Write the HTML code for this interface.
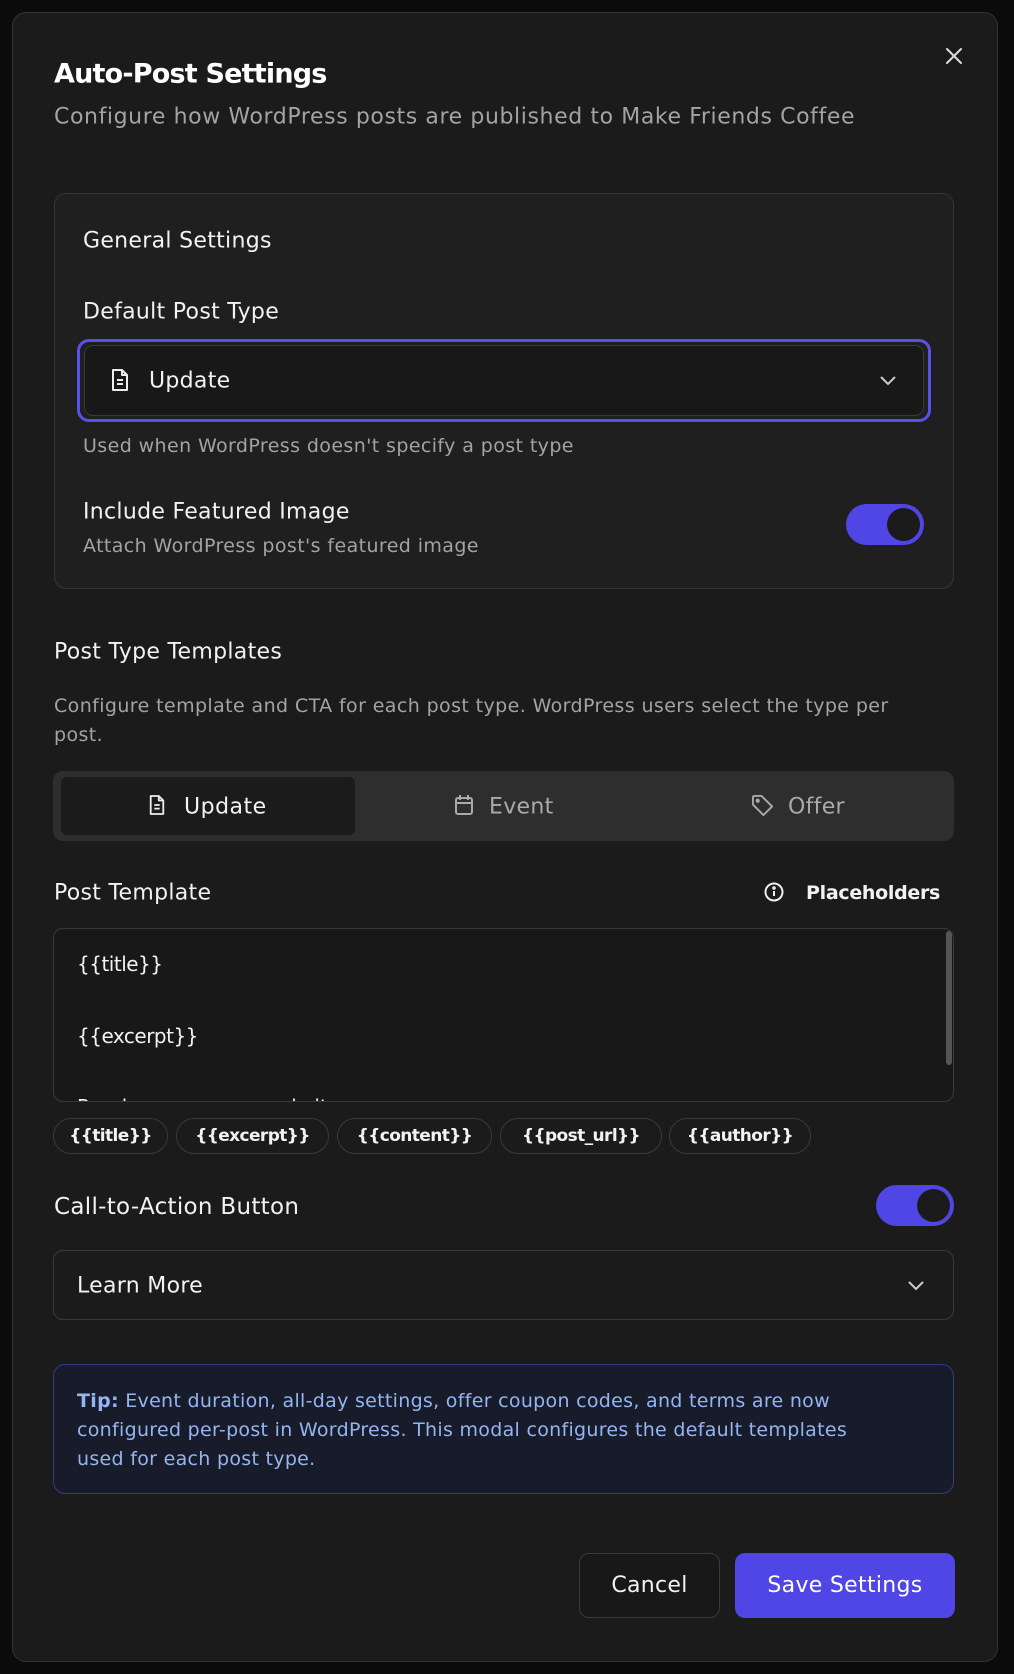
<!DOCTYPE html>
<html><head><meta charset="utf-8"><style>
*{box-sizing:border-box;margin:0;padding:0}
body{width:1014px;height:1674px;background:#0b0b0b;font-family:"DejaVu Sans","Liberation Sans",sans-serif;color:#f2f2f2;position:relative;overflow:hidden}
.a{position:absolute;white-space:nowrap}
.modal{position:absolute;left:12px;top:12px;width:986px;height:1650px;background:#1b1b1b;border:1px solid #333;border-radius:14px}
.lbl{font-size:22px;color:#f2f2f2;letter-spacing:0.3px}
.muted{color:#a3a3a3;font-size:19px;letter-spacing:0.4px}
.toggle{position:absolute;width:78px;height:41px;border-radius:21px;background:#4f46e5}
.toggle::after{content:"";position:absolute;right:4px;top:4px;width:33px;height:33px;border-radius:50%;background:#1b1b1b}
.chip{position:absolute;top:1118px;height:36px;border:1px solid #3a3a3a;border-radius:18px;background:#1b1b1b;font-weight:bold;font-size:17px;line-height:34px;text-align:center;letter-spacing:-0.6px}
.cy{transform:translateY(-50%)}
</style></head><body>
<div class="modal"></div>
<svg class="a" style="left:945px;top:47px" width="18" height="18" viewBox="0 0 18 18"><path d="M2 2L16 16M16 2L2 16" stroke="#ddd" stroke-width="2" stroke-linecap="round"/></svg>
<div class="a cy" style="left:54px;top:74px;font-size:27px;font-weight:bold;color:#fff;letter-spacing:-0.8px">Auto-Post Settings</div>
<div class="a cy" style="left:54px;top:117px;font-size:22px;color:#a3a3a3;letter-spacing:0.6px">Configure how WordPress posts are published to Make Friends Coffee</div>

<div class="a" style="left:54px;top:193px;width:900px;height:396px;background:#1f1f1f;border:1px solid #353535;border-radius:12px"></div>
<div class="a cy lbl" style="left:83px;top:241px">General Settings</div>
<div class="a cy lbl" style="left:83px;top:312px">Default Post Type</div>
<div class="a" style="left:77px;top:339px;width:854px;height:83px;border:3px solid #5b50e8;border-radius:12px"></div>
<div class="a" style="left:84px;top:345px;width:840px;height:71px;border:1px solid #3a3a3a;border-radius:9px;background:#181818"></div>
<svg class="a" style="left:110px;top:368px" width="20" height="24" viewBox="0 0 20 24" fill="none" stroke="#eee" stroke-width="2" stroke-linejoin="round"><path d="M3 2h9l5 5v15H3z"/><path d="M12 2v5h5M7 12h6M7 16h6"/></svg>
<div class="a cy" style="left:149px;top:381px;font-size:22px;letter-spacing:0.3px">Update</div>
<svg class="a" style="left:879px;top:375px" width="18" height="11" viewBox="0 0 18 11"><path d="M2 2l7 7 7-7" stroke="#ccc" stroke-width="2" fill="none"/></svg>
<div class="a cy muted" style="left:83px;top:446px">Used when WordPress doesn't specify a post type</div>
<div class="a cy lbl" style="left:83px;top:512px">Include Featured Image</div>
<div class="a cy muted" style="left:83px;top:546px">Attach WordPress post's featured image</div>
<div class="toggle" style="left:846px;top:504px"></div>

<div class="a cy lbl" style="left:54px;top:652px">Post Type Templates</div>
<div class="a muted" style="left:54px;top:692px;line-height:29px;white-space:normal;width:870px">Configure template and CTA for each post type. WordPress users select the type per post.</div>
<div class="a" style="left:53px;top:771px;width:901px;height:70px;background:#2e2e2e;border-radius:10px"></div>
<div class="a" style="left:61px;top:777px;width:294px;height:58px;background:#1b1b1b;border-radius:6px"></div>
<svg class="a" style="left:148px;top:794px" width="18" height="22" viewBox="0 0 20 24" fill="none" stroke="#eee" stroke-width="2" stroke-linejoin="round"><path d="M3 2h9l5 5v15H3z"/><path d="M12 2v5h5M7 12h6M7 16h6"/></svg>
<div class="a cy" style="left:184px;top:807px;font-size:22px;letter-spacing:0.5px">Update</div>
<svg class="a" style="left:454px;top:794px" width="20" height="22" viewBox="0 0 20 22" fill="none" stroke="#aaa" stroke-width="2"><rect x="2" y="4" width="16" height="16" rx="2"/><path d="M2 9h16M6 1v5M14 1v5"/></svg>
<div class="a cy" style="left:489px;top:807px;font-size:22px;color:#aaa;letter-spacing:0.3px">Event</div>
<svg class="a" style="left:751px;top:794px" width="23" height="23" viewBox="0 0 24 24" fill="none" stroke="#aaa" stroke-width="2" stroke-linejoin="round"><path d="M2 3v8l11 11 9-9L11 2H3z"/><circle cx="7" cy="7" r="1.2" fill="#aaa"/></svg>
<div class="a cy" style="left:788px;top:807px;font-size:22px;color:#aaa;letter-spacing:0.3px">Offer</div>

<div class="a cy lbl" style="left:54px;top:893px">Post Template</div>
<svg class="a" style="left:764px;top:882px" width="20" height="20" viewBox="0 0 20 20" fill="none" stroke="#eee" stroke-width="2"><circle cx="10" cy="10" r="8.5"/><path d="M10 9v5"/><circle cx="10" cy="6" r="0.8" fill="#eee"/></svg>
<div class="a cy" style="left:806px;top:893px;font-size:19px;font-weight:bold;letter-spacing:-0.3px">Placeholders</div>
<div class="a" style="left:53px;top:928px;width:901px;height:174px;border:1px solid #3a3a3a;border-radius:10px;background:#181818;overflow:hidden">
<div class="a cy" style="left:23px;top:35px;font-size:20px;letter-spacing:-0.5px">{{title}}</div>
<div class="a cy" style="left:23px;top:107px;font-size:20px;letter-spacing:-0.5px">{{excerpt}}</div>
<div class="a cy" style="left:23px;top:178px;font-size:20px">Read more on our website →</div>
<div class="a" style="left:892px;top:2px;width:6px;height:134px;border-radius:3px;background:#555"></div>
</div>
<div class="chip" style="left:53px;width:115px">{{title}}</div>
<div class="chip" style="left:176px;width:153px">{{excerpt}}</div>
<div class="chip" style="left:337px;width:155px">{{content}}</div>
<div class="chip" style="left:500px;width:162px">{{post_url}}</div>
<div class="chip" style="left:669px;width:142px">{{author}}</div>

<div class="a cy lbl" style="left:54px;top:1207px;font-size:23px">Call-to-Action Button</div>
<div class="toggle" style="left:876px;top:1185px"></div>
<div class="a" style="left:53px;top:1250px;width:901px;height:70px;border:1px solid #3a3a3a;border-radius:10px;background:#1b1b1b"></div>
<div class="a cy" style="left:77px;top:1286px;font-size:22px;letter-spacing:0.3px">Learn More</div>
<svg class="a" style="left:907px;top:1280px" width="18" height="11" viewBox="0 0 18 11"><path d="M2 2l7 7 7-7" stroke="#ccc" stroke-width="2" fill="none"/></svg>

<div class="a" style="left:53px;top:1364px;width:901px;height:130px;border:1px solid #31398a;border-radius:12px;background:#181c2a"></div>
<div class="a" style="left:77px;top:1387px;width:820px;white-space:normal;font-size:19px;line-height:29px;color:#93b5f2;letter-spacing:0.3px"><b>Tip:</b> Event duration, all-day settings, offer coupon codes, and terms are now configured per-post in WordPress. This modal configures the default templates used for each post type.</div>

<div class="a" style="left:579px;top:1553px;width:141px;height:65px;border:1px solid #3a3a3a;border-radius:10px;background:#181818;font-size:22px;line-height:64px;text-align:center;letter-spacing:0.3px">Cancel</div>
<div class="a" style="left:735px;top:1553px;width:220px;height:65px;border-radius:10px;background:#4f46e5;font-size:22px;line-height:66px;text-align:center;color:#fff;letter-spacing:0.3px">Save Settings</div>
</body></html>
